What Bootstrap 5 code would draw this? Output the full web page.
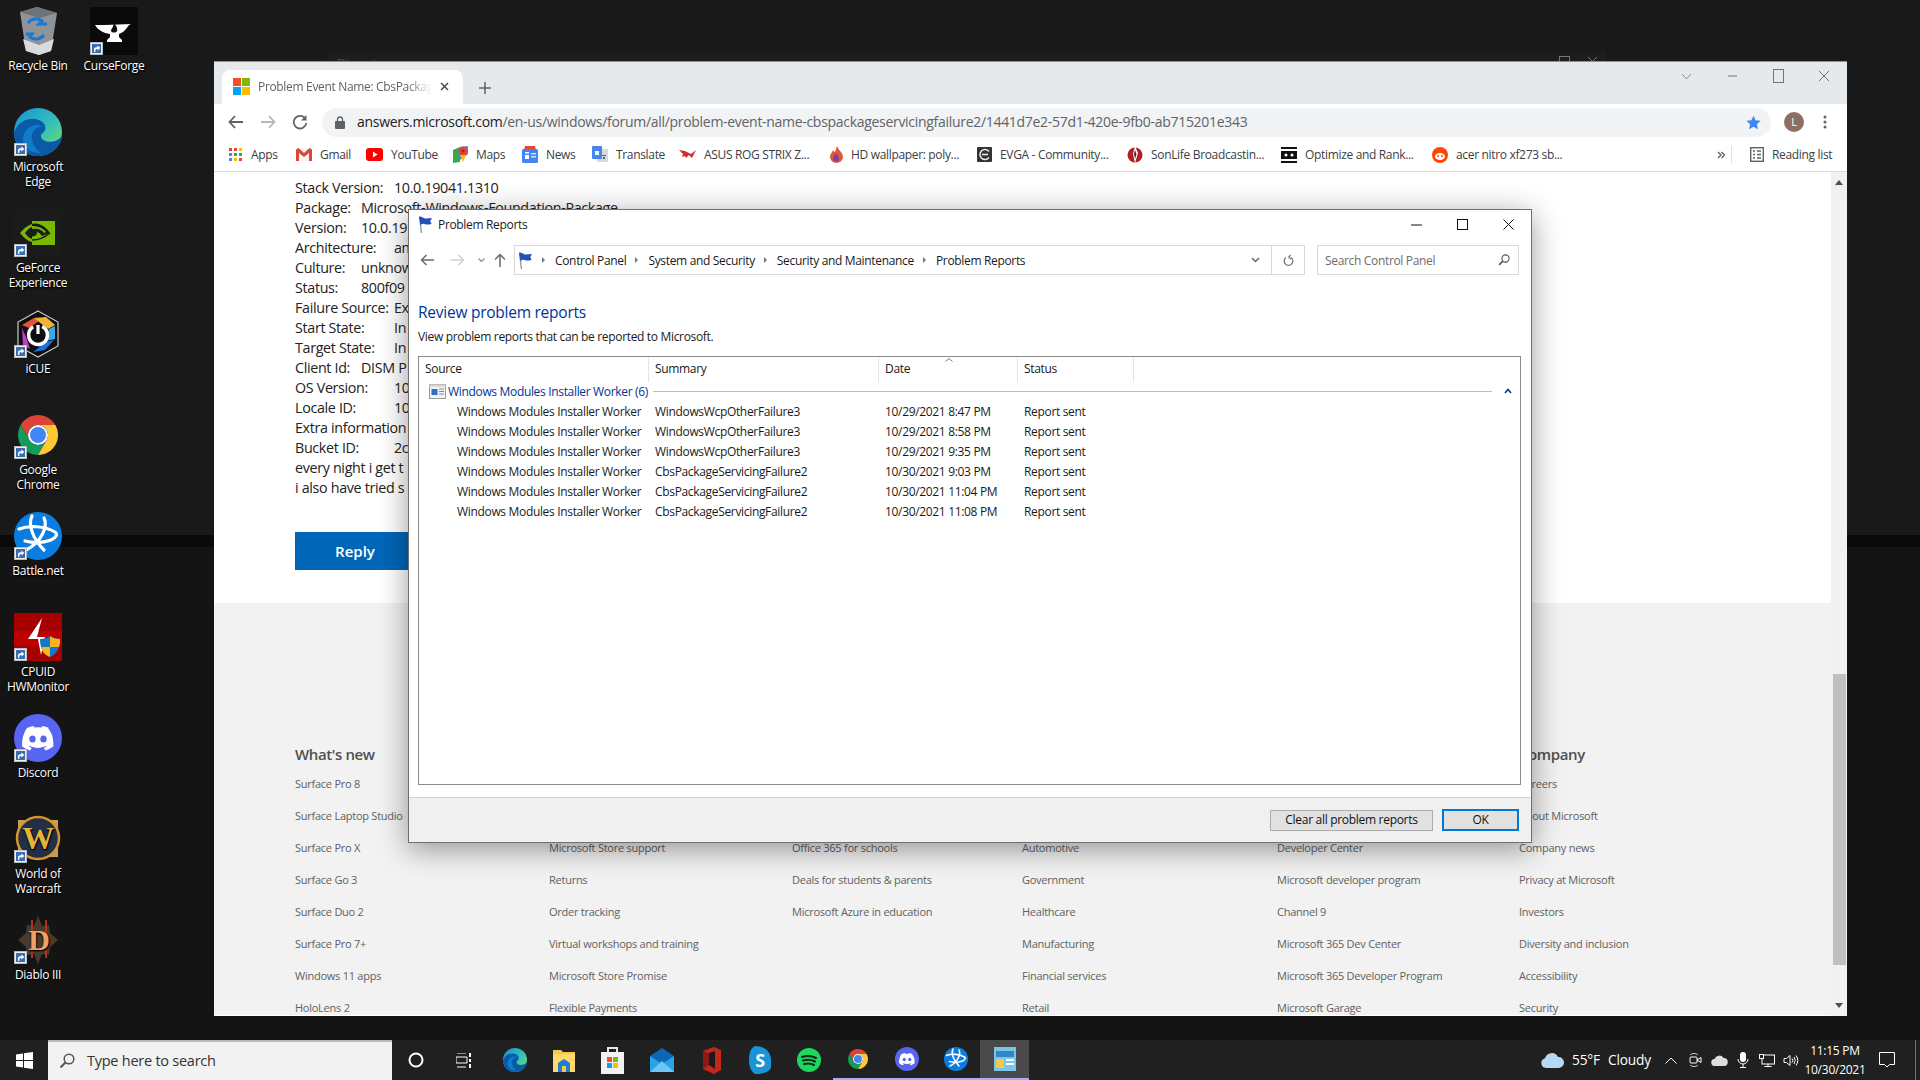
<!DOCTYPE html>
<html lang="en">
<head>
  <meta charset="UTF-8">
  <title>Problem Reports</title>
  <link rel="stylesheet" href="https://cdn.jsdelivr.net/npm/bootstrap@5.3.3/dist/css/bootstrap.min.css">
  <script src="https://cdn.jsdelivr.net/npm/bootstrap@5.3.3/dist/js/bootstrap.bundle.min.js"></script>
  <style>
    html, body { margin: 0; background: #141414; }
    body { font-family: "Open Sans", "Liberation Sans", sans-serif; font-size: 12px; letter-spacing: -.33px; line-height: 1.25; color: #1a1a1a; }
    svg { display: block; flex: none; }
    .screen { width: 1920px; height: 1080px; overflow: hidden; }
    .desk { height: 1040px; background: linear-gradient(to bottom, #191919 0 535px, #0a0a0a 535px 547px, #141414 547px); }

    /* desktop icons */
    .desk-col { width: 76px; }
    .desk-item { height: 101px; padding-top: 7px; color: #fff; text-align: center; line-height: 15px; letter-spacing: -.3px; text-shadow: 0 1px 2px #000, 1px 1px 1px #000; }
    .desk-ico { width: 48px; height: 48px; margin: 0 auto 3px; }
    .lnk { left: 0; bottom: 0; width: 13px; height: 13px; }
    .behind { left: 327px; top: 51px; width: 1279px; height: 14px; background: #1d1d1d; color: #4a4a4a; padding: 5px 0 0 10px; }
    .behind-ctl { gap: 17px; color: #777; }

    /* chrome window */
    .cwin { left: 214px; top: 61px; width: 1633px; height: 955px; background: #fff; border-top: 1px solid #8d9094; }
    .cstrip { height: 42px; background: #e6e9ec; padding-left: 8px; }
    .ctab { width: 241px; height: 34px; margin-top: 8px; padding: 0 0 1px 11px; background: #fff; border-radius: 8px 8px 0 0; color: #5f6368; }
    .ctab-title { width: 174px; margin-left: 8px; white-space: nowrap; overflow: hidden; -webkit-mask-image: linear-gradient(to right, #000 85%, transparent); mask-image: linear-gradient(to right, #000 85%, transparent); }
    .ctab-x { margin: 0 14px 0 auto; }
    .cplus { margin: 20px 0 0 16px; }
    .cctl { margin-left: auto; padding-bottom: 14px; color: #80868b; }
    .cctl > div { width: 46px; }
    .ctool { height: 36px; padding-left: 6px; }
    .ctool-ico { width: 32px; }
    .omni { height: 29px; width: 1449px; margin-left: 6px; padding: 0 10px 0 13px; background: #f1f3f4; border-radius: 15px; font-size: 14px; letter-spacing: -.3px; color: #5f6368; }
    .omni b { font-weight: 400; color: #202124; }
    .cavatar { margin-left: 13px; }
    .cdots { margin-left: 19px; }
    .cbm { height: 32px; padding: 0 0 2px 15px; border-bottom: 1px solid #d8dadd; display: grid; grid-template-columns: 67px 70px 87px 69px 70px 87px 151px 147px 150px 154px 151px 285px 14px 19px auto; align-items: center; color: #3c4043; }
    .cbm span { white-space: nowrap; }
    .cbm > div { gap: 8px; }
    .cbm-rule { height: 18px; }

    /* page */
    .article { height: 431px; padding: 6px 0 0 81px; font-size: 14.3px; line-height: 20px; color: #222; }
    .art-a { display: inline-block; width: 66px; }
    .art-b { display: inline-block; width: 99px; }
    .reply-btn { width: 120px; height: 38px; margin-top: 34px; background: #0067b8; color: #fff; font-size: 15px; font-weight: 600; border-radius: 0; border: 0; letter-spacing: 0; }
    .pfoot { height: 412px; overflow: hidden; background: #f2f2f2; padding: 141px 0 0 81px; color: #616161; font-size: 11px; }
    .pfoot-grid { display: grid; grid-template-columns: 254px 243px 230px 255px 242px 200px; }
    .pfoot-head { height: 24px; font-size: 15px; font-weight: 600; line-height: 20px; letter-spacing: -.4px; color: #505050; }
    .pfoot-link { height: 32px; line-height: 32px; white-space: nowrap; letter-spacing: -.25px; }
    .sbar { width: 16px; background: #f1f1f1; }
    .sbar-thumb { height: 291px; margin: 502px 1px 0 2px; background: #bfbfbf; }

    /* problem reports dialog */
    .dlg { left: 408px; top: 209px; width: 1124px; height: 634px; background: #fff; border: 1px solid #707070; box-shadow: 0 6px 28px rgba(0,0,0,.4); }
    .dlg-title { height: 29px; margin-bottom: 2px; padding-left: 9px; }
    .dlg-title-txt { margin-left: 5px; }
    .dlg-btns > div { width: 46px; height: 29px; }
    .dlg-nav { height: 34px; padding-top: 4px; }
    .dlg-arrows { width: 105px; padding-left: 11px; gap: 9px; }
    .crumb { width: 791px; height: 30px; border: 1px solid #d9d9d9; padding-left: 3px; }
    .crumb span { white-space: nowrap; }
    .crumb-sep { width: 0; height: 0; margin: 0 10px 0 9px; border-left: 3px solid #777; border-top: 3px solid transparent; border-bottom: 3px solid transparent; }
    .crumb-drop { margin: 0 11px 0 auto; }
    .crumb-ref { width: 33px; height: 28px; border-left: 1px solid #d9d9d9; }
    .srch { width: 202px; height: 30px; margin-left: 12px; padding: 0 8px 0 7px; border: 1px solid #d9d9d9; color: #6d6d6d; }
    .dlg-h { height: 22px; margin: 26px 0 0 9px; font-size: 15.5px; line-height: 22px; color: #003399; letter-spacing: -.25px; }
    .dlg-sub { height: 17px; margin: 5px 0 0 9px; line-height: 17px; }
    .plist { height: 430px; margin: 11px 10px 0 9px; border: 1px solid #8c8c8c; }
    .sort-caret { left: 526px; top: 1px; }
    .prow { display: grid; grid-template-columns: 230px 230px 139px 116px; }
    .prow > div { padding-left: 6px; white-space: nowrap; }
    .prow > div:first-child { padding-left: 38px; }
    .phead { height: 25px; line-height: 20px; }
    .phead > div { height: 25px; padding-top: 2px; border-right: 1px solid #e5e5e5; }
    .phead > div:first-child { padding-left: 6px; }
    .pgroup { height: 18px; margin-bottom: 2px; padding-left: 10px; color: #003399; }
    .pgroup-txt { margin-left: 2px; white-space: nowrap; }
    .pgroup-line { height: 1px; background: #a6bfe3; margin: 0 12px 0 5px; }
    .pdata { height: 20px; line-height: 20px; }
    .dfoot { height: 45px; margin-top: 12px; background: #f0f0f0; border-top: 1px solid #d4d4d4; padding-right: 12px; gap: 9px; }
    .dbtn { height: 21px; background: #e1e1e1; border: 1px solid #adadad; border-radius: 0; font-size: 12px; line-height: 1; padding: 0; letter-spacing: -.3px; color: #111; }
    .dbtn-clear { width: 163px; }
    .dbtn-ok { width: 77px; height: 22px; border: 2px solid #0078d7; }

    /* taskbar */
    .tbar { height: 40px; background: #202020; color: #fff; }
    .tb-item { width: 49px; height: 40px; }
    .tb-w48 { width: 48px; }
    .tb-first { margin-left: 1px; }
    .tb-run { border-bottom: 2px solid #acacf0; }
    .tb-now { background: #4a4a4a; }
    .tb-search { width: 344px; height: 40px; background: #f2f2f2; border-top: 2px solid #b9b9b9; padding-left: 11px; gap: 12px; color: #333; font-size: 14.5px; letter-spacing: -.25px; }
    .tray-i { width: 24px; height: 40px; }
    .clock { width: 64px; text-align: center; line-height: 19px; letter-spacing: -.25px; }
    .wtxt { font-size: 13.7px; letter-spacing: -.15px; }
    .notif { width: 40px; }
    .showdesk { width: 5px; height: 40px; margin-left: 8px; }
  </style>
</head>

<body>
  <svg width="0" height="0" class="position-absolute">
    <defs>
      <linearGradient id="edgeG" x1="0" y1="0" x2="1" y2="1"><stop offset="0" stop-color="#1591d8"/><stop offset=".55" stop-color="#35c1b8"/><stop offset="1" stop-color="#7fe35a"/></linearGradient>
      <symbol id="lnkArrow" viewBox="0 0 13 13"><rect width="13" height="13" fill="#f0f0f0"/><rect x=".5" y=".5" width="12" height="12" fill="none" stroke="#bbb"/><rect x="2" y="2" width="9" height="9" fill="#3c6cb0"/><path d="M4 10V7.500C4 6 5 5.200 6.500 5.200H7.400V3.600L10.400 6 7.400 8.400V6.900H6.600C5.600 6.900 5.300 7.600 5.300 10z" fill="#fff"/></symbol>
      <symbol id="icChrome" viewBox="0 0 48 48"><path fill="#db4437" d="M6.680 14A20 20 0 0 1 41.320 14H24A10 10 0 0 0 15.340 29z"/><path fill="#0f9d58" d="M6.680 14L15.340 29A10 10 0 0 0 32.660 29L24 44A20 20 0 0 1 6.680 14z"/><path fill="#fcc934" d="M41.320 14H24A10 10 0 0 1 32.660 29L24 44A20 20 0 0 0 41.320 14z"/><circle cx="24" cy="24" r="10" fill="#fff"/><circle cx="24" cy="24" r="8" fill="#4285f4"/></symbol>
      <symbol id="icEdge" viewBox="0 0 48 48"><circle cx="24" cy="24" r="24" fill="url(#edgeG)"/><path fill="#0b5aa8" d="M0 25C3 15 12 10 21 11c7 1 12 6 10 11-1 3-4 3-4 6 0 5 8 7 14 5 3-1 5-3 7-5-1 11-11 20-24 20C10 48 0 38 0 25z"/><path fill="#0f7cc9" d="M9 30c1-8 7-13 14-13 3 0 5 1 6 2-5-1-10 2-11 8-1 7 3 14 9 18-10 1-19-6-18-15z"/></symbol>
      <symbol id="icDiscord" viewBox="0 0 48 48"><circle cx="24" cy="24" r="24" fill="#5865f2"/><path fill="#fff" d="M35 14c-2.200-1-4.400-1.700-6.600-2.100l-.9 1.700a22 22 0 0 0-7 0l-.9-1.700c-2.200.4-4.400 1.100-6.600 2.100-4.200 6.300-5.300 12.500-4.800 18.600 2.700 2 5.300 3.200 7.800 4l1.700-2.700c-1-.3-1.900-.8-2.800-1.300l.7-.5c5.300 2.400 11.100 2.400 16.300 0l.7.500c-.9.500-1.800 1-2.800 1.300l1.700 2.700c2.500-.8 5.100-2 7.800-4 .6-7.100-1.100-13.300-5.300-18.600z"/><ellipse cx="18.500" cy="25" rx="3.200" ry="3.600" fill="#5865f2"/><ellipse cx="29.500" cy="25" rx="3.200" ry="3.600" fill="#5865f2"/></symbol>
      <symbol id="icBattle" viewBox="0 0 48 48"><circle cx="24" cy="24" r="24" fill="#0b7de0"/><g fill="none" stroke="#fff" stroke-width="3.200" stroke-linecap="round"><path d="M5 17c10-4 26-3 36 3 3 2 1 6-4 8-8 3-18 3-26 1"/><path d="M18 4c-4 8 0 22 12 34"/><path d="M30 6c4 8-2 24-18 32"/></g></symbol>
      <symbol id="icMag" viewBox="0 0 16 16"><circle cx="10" cy="6" r="4.800" fill="none" stroke="#555" stroke-width="1.500"/><path d="M6.400 9.500L1.500 14.500" stroke="#555" stroke-width="2"/></symbol>
      <symbol id="icFlag" viewBox="0 0 15 17"><path d="M1.500 1L3.500 17" stroke="#8a94a6" stroke-width="1.300"/><path d="M1 .5c4 0 4 2 7 2 2 0 4-.5 6-.5-1 1.500-1 2.500-2 3 1 1 1 1.500 1.500 3-3 .5-5 1-7 0-1-.5-2.500 0-4 1z" fill="#2250b8"/></symbol>
    </defs>
  </svg>

  <div class="screen d-flex flex-column">
    <div class="desk position-relative d-flex">

      <div class="desk-col">
        <div class="desk-item"><div class="desk-ico position-relative">
          <svg width="48" height="48" viewBox="0 0 48 48"><path d="M6 5L23 0 43 6 37 44 25 48 12 44z" fill="#8f9498"/><path d="M6 5L23 0 43 6 25 11z" fill="#6e7377"/><path d="M9 32l16 6 15-6-3 12-12 4-13-4z" fill="#d8dade"/><path d="M14 16a10 10 0 0 1 14-2l-3 3h8" fill="none" stroke="#1b79d0" stroke-width="3"/><path d="M30 28a10 10 0 0 1-14 2l2-3h-6" fill="none" stroke="#1b79d0" stroke-width="3"/></svg>
        </div>Recycle Bin</div>
        <div class="desk-item"><div class="desk-ico position-relative"><svg width="48" height="48"><use href="#icEdge"/></svg><svg class="lnk position-absolute"><use href="#lnkArrow"/></svg></div>Microsoft<br>Edge</div>
        <div class="desk-item"><div class="desk-ico position-relative">
          <svg width="48" height="48" viewBox="0 0 48 48"><rect width="48" height="48" fill="#1b1b1b"/><rect x="18" y="12" width="23" height="24" fill="#76b900"/><path d="M6 24c5-6 9-8 12-9v3c-3 1-5 3-7 6 2 3 4 5 7 6v3c-4-1-8-4-12-9z" fill="#76b900"/><ellipse cx="18" cy="24" rx="5" ry="3.500" fill="#1b1b1b"/><path d="M18 15c7-2 14 3 18 9l-8 3c-2-3-5-5-10-5v-2c6-1 10 1 12 4l2-1c-3-4-8-6-14-6z" fill="#1b1b1b"/><path d="M18 31c5 0 12-2 18-7" fill="none" stroke="#1b1b1b" stroke-width="1.500"/></svg>
          <svg class="lnk position-absolute"><use href="#lnkArrow"/></svg></div>GeForce<br>Experience</div>
        <div class="desk-item"><div class="desk-ico position-relative">
          <svg width="48" height="48" viewBox="0 0 48 48"><path d="M24 1L44 12V36L24 47 4 36V12z" fill="#0e0e0e" stroke="#c9c9c9" stroke-width="1.200"/><path d="M8 15L20 8l8 1-13 9z" fill="#e5533d"/><path d="M20 8l12-1 9 8-7 4z" fill="#f2b431"/><path d="M41 16v13l-9 2 3-12z" fill="#38a7e8"/><path d="M32 32l8-2-9 10-12 2z" fill="#1a73e0"/><path d="M8 18l4 9 4 12-7-4z" fill="#c03cd2"/><circle cx="24" cy="25" r="9.500" fill="none" stroke="#fff" stroke-width="3.500" stroke-dasharray="50 10" transform="rotate(-64 24 25)"/><rect x="22.400" y="15" width="3.200" height="9" fill="#fff"/></svg>
          <svg class="lnk position-absolute"><use href="#lnkArrow"/></svg></div>iCUE</div>
        <div class="desk-item"><div class="desk-ico position-relative"><svg width="48" height="48"><use href="#icChrome"/></svg><svg class="lnk position-absolute"><use href="#lnkArrow"/></svg></div>Google<br>Chrome</div>
        <div class="desk-item"><div class="desk-ico position-relative"><svg width="48" height="48"><use href="#icBattle"/></svg><svg class="lnk position-absolute"><use href="#lnkArrow"/></svg></div>Battle.net</div>
        <div class="desk-item"><div class="desk-ico position-relative">
          <svg width="48" height="48" viewBox="0 0 48 48"><rect width="48" height="48" fill="#a80000"/><rect y="18" width="48" height="14" fill="#bd0000"/><path d="M28 5L14 26H24L27 42 31 24H23z" fill="#fff"/><path d="M26 26c4 0 8-1 10-3 2 2 6 3 10 3 0 9-3 15-10 18-7-3-10-9-10-18z" fill="#1476c8"/><path d="M36 23c2 2 6 3 10 3 0 3 0 5-1 8H36z" fill="#f4b51e"/><path d="M27 34H36V44C31 42 28 39 27 34z" fill="#f4b51e"/></svg>
          <svg class="lnk position-absolute"><use href="#lnkArrow"/></svg></div>CPUID<br>HWMonitor</div>
        <div class="desk-item"><div class="desk-ico position-relative"><svg width="48" height="48"><use href="#icDiscord"/></svg><svg class="lnk position-absolute"><use href="#lnkArrow"/></svg></div>Discord</div>
        <div class="desk-item"><div class="desk-ico position-relative">
          <svg width="48" height="48" viewBox="0 0 48 48"><rect x="4" y="5" width="40" height="37" fill="#c7a056"/><circle cx="24" cy="23" r="21" fill="#223047" stroke="#d9942b" stroke-width="2.500"/><text x="24" y="34" text-anchor="middle" font-family="Liberation Serif" font-weight="700" font-size="32" fill="#e5b23c">W</text></svg>
          <svg class="lnk position-absolute"><use href="#lnkArrow"/></svg></div>World of<br>Warcraft</div>
        <div class="desk-item"><div class="desk-ico position-relative">
          <svg width="48" height="48" viewBox="0 0 48 48"><path d="M24 0l4 10 7-1 1 8 8 7-8 7-1 8-7-1-4 10-4-10-7 1-1-8-8-7 8-7 1-8 7 1z" fill="#4a3a2c"/><path d="M18 4v38M32 4v38" stroke="#b3301a" stroke-width="2"/><text x="25" y="34" text-anchor="middle" font-family="Liberation Serif" font-weight="700" font-size="30" fill="#e9a46a">D</text></svg>
          <svg class="lnk position-absolute"><use href="#lnkArrow"/></svg></div>Diablo III</div>
      </div>
      <div class="desk-col">
        <div class="desk-item"><div class="desk-ico position-relative">
          <svg width="48" height="48" viewBox="0 0 48 48"><rect width="48" height="48" fill="#0a0a0a"/><path d="M5 18h10l26-1-2 1c-4 6-7 8-10 9v3l3 3v2H17v-2l3-3v-3c-7-1-12-4-15-9z" fill="#fff"/><path d="M24 16c2 3 4 5 3 8-1 2-5 2-6 0 0-2 2-3 3-8z" fill="#111"/></svg>
          <svg class="lnk position-absolute"><use href="#lnkArrow"/></svg></div>CurseForge</div>
      </div>

      <div class="behind position-absolute d-flex align-items-start justify-content-between">
        <span>Dispost</span>
        <div class="behind-ctl d-flex pe-2">
          <svg width="11" height="11"><rect x=".5" y=".5" width="10" height="10" fill="none" stroke="#777"/></svg>
          <svg width="11" height="11"><path d="M1 1L10 10M10 1L1 10" stroke="#777"/></svg>
        </div>
      </div>

      <div class="cwin position-absolute d-flex flex-column">
        <div class="cstrip d-flex">
          <div class="ctab d-flex align-items-center">
            <svg width="17" height="17" viewBox="0 0 17 17"><rect width="8" height="8" fill="#f25022"/><rect x="9" width="8" height="8" fill="#7fba00"/><rect y="9" width="8" height="8" fill="#00a4ef"/><rect x="9" y="9" width="8" height="8" fill="#ffb900"/></svg>
            <span class="ctab-title">Problem Event Name: CbsPackag</span>
            <svg class="ctab-x" width="9" height="9"><path d="M1 1L8 8M8 1L1 8" stroke="#444" stroke-width="1.400"/></svg>
          </div>
          <svg class="cplus" width="12" height="12"><path d="M6 0V12M0 6H12" stroke="#5f6368" stroke-width="1.500"/></svg>
          <div class="cctl d-flex align-items-center text-center">
            <div><svg class="mx-auto" width="11" height="7"><path d="M1 1L5.500 6 10 1" fill="none" stroke="#8a8e92"/></svg></div>
            <div><svg class="mx-auto" width="11" height="2"><path d="M1 1H10" stroke="#70757a"/></svg></div>
            <div><svg class="mx-auto" width="11" height="14"><rect x=".5" y=".5" width="10" height="13" fill="none" stroke="#70757a"/></svg></div>
            <div><svg class="mx-auto" width="12" height="12"><path d="M1 1L11 11M11 1L1 11" stroke="#70757a"/></svg></div>
          </div>
        </div>

        <div class="ctool d-flex align-items-center">
          <div class="ctool-ico"><svg class="mx-auto" width="16" height="14" viewBox="0 0 16 14"><path d="M15 7H2M7 1L1.500 7 7 13" fill="none" stroke="#5f6368" stroke-width="1.800"/></svg></div>
          <div class="ctool-ico"><svg class="mx-auto" width="16" height="14" viewBox="0 0 16 14"><path d="M1 7H14M9 1L14.500 7 9 13" fill="none" stroke="#b4b7ba" stroke-width="1.800"/></svg></div>
          <div class="ctool-ico"><svg class="mx-auto" width="16" height="16" viewBox="0 0 16 16"><path d="M13.500 5A6.300 6.300 0 1 0 14.300 9" fill="none" stroke="#5f6368" stroke-width="1.800"/><path d="M14.500 1V6.500H9z" fill="#5f6368"/></svg></div>
          <div class="omni d-flex align-items-center">
            <svg class="me-2" width="10" height="13" viewBox="0 0 10 13"><path d="M2.500 5V3.500a2.500 2.500 0 0 1 5 0V5" fill="none" stroke="#5f6368" stroke-width="1.300"/><rect y="5" width="10" height="8" rx="1" fill="#5f6368"/></svg>
            <span class="ms-1 text-nowrap"><b>answers.microsoft.com</b>/en-us/windows/forum/all/problem-event-name-cbspackageservicingfailure2/1441d7e2-57d1-420e-9fb0-ab715201e343</span>
            <svg class="ms-auto" width="15" height="15" viewBox="0 0 24 24"><path d="M12 1l3.400 7.400 8 .9-6 5.400 1.700 8L12 18.600 4.900 22.700l1.700-8-6-5.400 8-.9z" fill="#4285f4"/></svg>
          </div>
          <svg class="cavatar" width="20" height="20" viewBox="0 0 20 20"><circle cx="10" cy="10" r="10" fill="#8d6e63"/><text x="10" y="14" text-anchor="middle" font-size="11" fill="#fff" font-family="Open Sans">L</text></svg>
          <svg class="cdots" width="4" height="14"><circle cx="2" cy="2" r="1.500" fill="#5f6368"/><circle cx="2" cy="7" r="1.500" fill="#5f6368"/><circle cx="2" cy="12" r="1.500" fill="#5f6368"/></svg>
        </div>

        <div class="cbm">
          <div class="d-flex align-items-center">
            <svg width="14" height="14"><rect width="3" height="3" fill="#ea4335"/><rect x="5" width="3" height="3" fill="#ea4335"/><rect x="10" width="3" height="3" fill="#fbbc04"/><rect y="5" width="3" height="3" fill="#4285f4"/><rect x="5" y="5" width="3" height="3" fill="#34a853"/><rect x="10" y="5" width="3" height="3" fill="#34a853"/><rect y="10" width="3" height="3" fill="#4285f4"/><rect x="5" y="10" width="3" height="3" fill="#fbbc04"/><rect x="10" y="10" width="3" height="3" fill="#ea4335"/></svg><span>Apps</span>
          </div>
          <div class="d-flex align-items-center">
            <svg width="16" height="13" viewBox="0 0 16 13"><rect y="1" width="16" height="12" fill="#f4f4f4"/><path d="M0 1.500V13H3V5L8 9 13 5V13H16V1.500L13.500 0 8 5 2.500 0z" fill="#d9483b"/></svg><span>Gmail</span>
          </div>
          <div class="d-flex align-items-center">
            <svg width="17" height="13" viewBox="0 0 17 13"><rect width="17" height="13" rx="3" fill="#f00"/><path d="M7 3.500V9.500L11.500 6.500z" fill="#fff"/></svg><span>YouTube</span>
          </div>
          <div class="d-flex align-items-center">
            <svg width="15" height="17" viewBox="0 0 15 17"><path d="M0 4L7 1V16L0 17z" fill="#34a853"/><path d="M7 1L15 0V8L7 14z" fill="#4285f4"/><circle cx="10" cy="5" r="4.500" fill="#ea4335"/><path d="M7 9L10 16l3-7z" fill="#fbbc04"/><circle cx="10" cy="5" r="1.600" fill="#a52714"/></svg><span>Maps</span>
          </div>
          <div class="d-flex align-items-center">
            <svg width="16" height="17" viewBox="0 0 16 17"><path d="M3 0H13L14 4H2z" fill="#e8453c"/><rect y="3" width="16" height="14" rx="1.500" fill="#4285f4"/><rect x="3" y="6" width="4" height="1.500" fill="#fff"/><rect x="3" y="9" width="4" height="4" fill="#fff"/><rect x="9" y="7" width="5" height="1.500" fill="#cfe0fb"/><rect x="9" y="10" width="5" height="1.500" fill="#cfe0fb"/></svg><span>News</span>
          </div>
          <div class="d-flex align-items-center">
            <svg width="16" height="17" viewBox="0 0 16 17"><rect x="5" y="3" width="11" height="13" rx="1" fill="#d7d9dc"/><rect width="10" height="13" rx="1" fill="#4285f4"/><rect x="3" y="5" width="4" height="4" fill="#fff"/><rect x="10" y="9" width="4" height="1" fill="#5f6368"/><rect x="11" y="11" width="2" height="2" fill="#5f6368"/></svg><span>Translate</span>
          </div>
          <div class="d-flex align-items-center">
            <svg width="17" height="11" viewBox="0 0 17 11"><path d="M0 1l6 1 6 3 5-4-4 8-3-3-3 3-1-2-3 1 1-3z" fill="#d42a31"/></svg><span>ASUS ROG STRIX Z...</span>
          </div>
          <div class="d-flex align-items-center">
            <svg width="13" height="17" viewBox="0 0 13 17"><path d="M7 0c1 4 6 6 6 11a6.500 6 0 0 1-13 0c0-3 2-4 3-7 1 1 1 2 2 2 1-2 1-4 2-6z" fill="#e0573a"/><path d="M6 7c1 2 3 3 3 5.500a3 3 0 0 1-6 0C3 11 5 9 6 7z" fill="#7d3fa0"/></svg><span>HD wallpaper: poly...</span>
          </div>
          <div class="d-flex align-items-center">
            <svg width="15" height="15" viewBox="0 0 15 15"><rect width="15" height="15" rx="1" fill="#333"/><path d="M12 4.500A5 5 0 1 0 12 10.500M5 7.500H11" fill="none" stroke="#eee" stroke-width="1.500"/></svg><span>EVGA - Community...</span>
          </div>
          <div class="d-flex align-items-center">
            <svg width="16" height="17" viewBox="0 0 16 17"><circle cx="8" cy="9" r="7.500" fill="#b81c22"/><path d="M8 0L11 7 8 17 6 8z" fill="#fff"/><path d="M8 4L9.500 8 8 13 7 8z" fill="#333"/></svg><span>SonLife Broadcastin...</span>
          </div>
          <div class="d-flex align-items-center">
            <svg width="16" height="16" viewBox="0 0 16 16"><rect width="16" height="16" fill="#111"/><rect y="2" width="16" height="2" fill="#fff"/><rect x="1" y="5" width="14" height="6" fill="#111"/><circle cx="5" cy="8" r="1.500" fill="#fff"/><circle cx="11" cy="8" r="1.500" fill="#fff"/><rect y="12" width="16" height="2" fill="#fff"/></svg><span>Optimize and Rank...</span>
          </div>
          <div class="d-flex align-items-center">
            <svg width="16" height="16" viewBox="0 0 16 16"><circle cx="8" cy="8" r="8" fill="#ff4500"/><ellipse cx="8" cy="9.500" rx="5" ry="3.500" fill="#fff"/><circle cx="6" cy="9" r="1" fill="#ff4500"/><circle cx="10" cy="9" r="1" fill="#ff4500"/></svg><span>acer nitro xf273 sb...</span>
          </div>
          <svg width="8" height="8" viewBox="0 0 8 8"><path d="M1 1L4 4 1 7M4.500 1L7.500 4 4.500 7" fill="none" stroke="#5f6368" stroke-width="1.400"/></svg>
          <div class="cbm-rule border-start"></div>
          <div class="d-flex align-items-center">
            <svg width="14" height="15" viewBox="0 0 14 15"><rect x=".7" y=".7" width="12.600" height="13.600" fill="none" stroke="#5f6368" stroke-width="1.400"/><path d="M3 4H5M3 7.500H5M3 11H5M7 4H11M7 7.500H11M7 11H11" stroke="#5f6368" stroke-width="1.300"/></svg><span>Reading list</span>
          </div>
        </div>

        <div class="d-flex flex-grow-1 overflow-hidden">
          <div class="flex-grow-1 overflow-hidden">
            <div class="article">
              <div><span class="art-b">Stack Version:</span>10.0.19041.1310</div>
              <div><span class="art-a">Package:</span>Microsoft-Windows-Foundation-Package</div>
              <div><span class="art-a">Version:</span>10.0.19</div>
              <div><span class="art-b">Architecture:</span>am</div>
              <div><span class="art-a">Culture:</span>unknow</div>
              <div><span class="art-a">Status:</span>800f09</div>
              <div><span class="art-b">Failure Source:</span>Ex</div>
              <div><span class="art-b">Start State:</span>In</div>
              <div><span class="art-b">Target State:</span>In</div>
              <div><span class="art-a">Client Id:</span>DISM P</div>
              <div><span class="art-b">OS Version:</span>10</div>
              <div><span class="art-b">Locale ID:</span>10</div>
              <div>Extra information</div>
              <div><span class="art-b">Bucket ID:</span>2c</div>
              <div>every night i get t</div>
              <div>i also have tried s</div>
              <button class="btn reply-btn">Reply</button>
            </div>
            <div class="pfoot">
              <div class="pfoot-grid">
                <div><div class="pfoot-head">What's new</div><div class="pfoot-link">Surface Pro 8</div><div class="pfoot-link">Surface Laptop Studio</div><div class="pfoot-link">Surface Pro X</div><div class="pfoot-link">Surface Go 3</div><div class="pfoot-link">Surface Duo 2</div><div class="pfoot-link">Surface Pro 7+</div><div class="pfoot-link">Windows 11 apps</div><div class="pfoot-link">HoloLens 2</div></div>
                <div><div class="pfoot-head">&nbsp;</div><div class="pfoot-link">&nbsp;</div><div class="pfoot-link">&nbsp;</div><div class="pfoot-link">Microsoft Store support</div><div class="pfoot-link">Returns</div><div class="pfoot-link">Order tracking</div><div class="pfoot-link">Virtual workshops and training</div><div class="pfoot-link">Microsoft Store Promise</div><div class="pfoot-link">Flexible Payments</div></div>
                <div><div class="pfoot-head">&nbsp;</div><div class="pfoot-link">&nbsp;</div><div class="pfoot-link">&nbsp;</div><div class="pfoot-link">Office 365 for schools</div><div class="pfoot-link">Deals for students &amp; parents</div><div class="pfoot-link">Microsoft Azure in education</div></div>
                <div><div class="pfoot-head">&nbsp;</div><div class="pfoot-link">&nbsp;</div><div class="pfoot-link">&nbsp;</div><div class="pfoot-link">Automotive</div><div class="pfoot-link">Government</div><div class="pfoot-link">Healthcare</div><div class="pfoot-link">Manufacturing</div><div class="pfoot-link">Financial services</div><div class="pfoot-link">Retail</div></div>
                <div><div class="pfoot-head">&nbsp;</div><div class="pfoot-link">&nbsp;</div><div class="pfoot-link">&nbsp;</div><div class="pfoot-link">Developer Center</div><div class="pfoot-link">Microsoft developer program</div><div class="pfoot-link">Channel 9</div><div class="pfoot-link">Microsoft 365 Dev Center</div><div class="pfoot-link">Microsoft 365 Developer Program</div><div class="pfoot-link">Microsoft Garage</div></div>
                <div><div class="pfoot-head">Company</div><div class="pfoot-link">Careers</div><div class="pfoot-link">About Microsoft</div><div class="pfoot-link">Company news</div><div class="pfoot-link">Privacy at Microsoft</div><div class="pfoot-link">Investors</div><div class="pfoot-link">Diversity and inclusion</div><div class="pfoot-link">Accessibility</div><div class="pfoot-link">Security</div></div>
              </div>
            </div>
          </div>
          <div class="sbar position-relative">
            <svg class="position-absolute top-0 start-0 mt-2 ms-1" width="8" height="5"><path d="M4 0L8 5H0z" fill="#505050"/></svg>
            <div class="sbar-thumb"></div>
            <svg class="position-absolute bottom-0 start-0 mb-2 ms-1" width="8" height="5"><path d="M0 0H8L4 5z" fill="#505050"/></svg>
          </div>
        </div>
      </div>

      <div class="dlg position-absolute d-flex flex-column">
        <div class="dlg-title d-flex align-items-center">
          <svg width="15" height="17"><use href="#icFlag"/></svg>
          <span class="dlg-title-txt">Problem Reports</span>
          <div class="dlg-btns d-flex ms-auto">
            <div class="d-flex align-items-center justify-content-center"><svg width="11" height="2"><path d="M0 1H11" stroke="#111"/></svg></div>
            <div class="d-flex align-items-center justify-content-center"><svg width="11" height="11"><rect x=".5" y=".5" width="10" height="10" fill="none" stroke="#111"/></svg></div>
            <div class="d-flex align-items-center justify-content-center"><svg width="11" height="11"><path d="M.5 .5L10.500 10.500M10.500 .5L.5 10.500" stroke="#111"/></svg></div>
          </div>
        </div>
        <div class="dlg-nav d-flex">
          <div class="dlg-arrows d-flex align-items-center">
            <svg width="14" height="12" viewBox="0 0 14 12"><path d="M14 6H2M6.500 1L1.500 6 6.500 11" fill="none" stroke="#6b6b6b" stroke-width="1.500"/></svg>
            <svg class="ms-2" width="14" height="12" viewBox="0 0 14 12"><path d="M0 6H12M7.500 1L12.500 6 7.500 11" fill="none" stroke="#cfcfcf" stroke-width="1.500"/></svg>
            <svg class="ms-1" width="7" height="5"><path d="M.5 .5L3.500 3.500 6.500 .5" fill="none" stroke="#8a8a8a" stroke-width="1.200"/></svg>
            <svg width="12" height="14" viewBox="0 0 12 14"><path d="M6 14V2M1 6.500L6 1.500 11 6.500" fill="none" stroke="#6b6b6b" stroke-width="1.500"/></svg>
          </div>
          <div class="crumb d-flex align-items-center">
            <svg width="15" height="17"><use href="#icFlag"/></svg>
            <div class="crumb-sep"></div><span>Control Panel</span>
            <div class="crumb-sep"></div><span>System and Security</span>
            <div class="crumb-sep"></div><span>Security and Maintenance</span>
            <div class="crumb-sep"></div><span>Problem Reports</span>
            <svg class="crumb-drop" width="9" height="6"><path d="M1 1L4.500 4.500 8 1" fill="none" stroke="#666" stroke-width="1.500"/></svg>
            <div class="crumb-ref d-flex align-items-center justify-content-center"><svg width="11" height="12" viewBox="0 0 11 12"><path d="M3 3.500A4.300 4.300 0 1 0 8 3.500M5.500 3.500L7.500 1M5.500 3.500L8 5" fill="none" stroke="#777" stroke-width="1.300"/></svg></div>
          </div>
          <div class="srch d-flex align-items-center">
            <span>Search Control Panel</span>
            <svg class="ms-auto" width="12" height="12"><use href="#icMag"/></svg>
          </div>
        </div>
        <div class="dlg-h">Review problem reports</div>
        <div class="dlg-sub">View problem reports that can be reported to Microsoft.</div>
        <div class="plist position-relative">
          <div class="prow phead">
            <div>Source</div><div>Summary</div><div>Date</div><div>Status</div>
          </div>
          <svg class="sort-caret position-absolute" width="8" height="4"><path d="M.5 3.500L4 .5 7.500 3.500" fill="none" stroke="#777"/></svg>
          <div class="pgroup d-flex align-items-center">
            <svg width="17" height="15" viewBox="0 0 17 15"><rect x=".5" y=".5" width="16" height="14" fill="#f4f4f4" stroke="#9a9a9a"/><rect x=".5" y=".5" width="16" height="2.500" fill="#d8d8d8"/><rect x="2.500" y="5" width="6" height="6" fill="#2f6fc4"/><path d="M10 5H15M10 7.500H15M10 10H15" stroke="#7a8aa0"/></svg>
            <span class="pgroup-txt">Windows Modules Installer Worker (6)</span>
            <div class="pgroup-line flex-grow-1"></div>
            <svg class="me-2" width="8" height="6"><path d="M1 5L4 1.500 7 5" fill="none" stroke="#003399" stroke-width="1.600"/></svg>
          </div>
          <div class="prow pdata"><div>Windows Modules Installer Worker</div><div>WindowsWcpOtherFailure3</div><div>10/29/2021 8:47 PM</div><div>Report sent</div></div>
          <div class="prow pdata"><div>Windows Modules Installer Worker</div><div>WindowsWcpOtherFailure3</div><div>10/29/2021 8:58 PM</div><div>Report sent</div></div>
          <div class="prow pdata"><div>Windows Modules Installer Worker</div><div>WindowsWcpOtherFailure3</div><div>10/29/2021 9:35 PM</div><div>Report sent</div></div>
          <div class="prow pdata"><div>Windows Modules Installer Worker</div><div>CbsPackageServicingFailure2</div><div>10/30/2021 9:03 PM</div><div>Report sent</div></div>
          <div class="prow pdata"><div>Windows Modules Installer Worker</div><div>CbsPackageServicingFailure2</div><div>10/30/2021 11:04 PM</div><div>Report sent</div></div>
          <div class="prow pdata"><div>Windows Modules Installer Worker</div><div>CbsPackageServicingFailure2</div><div>10/30/2021 11:08 PM</div><div>Report sent</div></div>
        </div>
        <div class="dfoot d-flex align-items-center justify-content-end">
          <button class="btn dbtn dbtn-clear">Clear all problem reports</button>
          <button class="btn dbtn dbtn-ok">OK</button>
        </div>
      </div>
    </div>

    <div class="tbar d-flex align-items-center">
      <div class="tb-item tb-w48 d-flex align-items-center justify-content-center"><svg width="17" height="17" viewBox="0 0 17 17"><path d="M0 2.500L7 1.500V8H0zM8 1.300L17 0V8H8zM0 9H7V15.500L0 14.500zM8 9H17V17L8 15.700z" fill="#fff"/></svg></div>
      <div class="tb-search d-flex align-items-center">
        <svg width="16" height="16"><use href="#icMag"/></svg><span>Type here to search</span>
      </div>
      <div class="tb-item tb-w48 d-flex align-items-center justify-content-center"><svg width="16" height="16"><circle cx="8" cy="8" r="6.500" fill="none" stroke="#fff" stroke-width="2"/></svg></div>
      <div class="tb-item d-flex align-items-center justify-content-center"><svg width="17" height="15" viewBox="0 0 17 15"><path d="M1 0H10M1 14H10M0 4H11V10H0z" fill="none" stroke="#fff"/><path d="M14 0V4M14 6V9M14 11V15" stroke="#fff" stroke-width="2"/></svg></div>
      <div class="tb-item tb-first d-flex align-items-center justify-content-center"><svg width="24" height="24"><use href="#icEdge"/></svg></div>
      <div class="tb-item d-flex align-items-center justify-content-center"><svg width="22" height="24" viewBox="0 0 22 24"><path d="M0 2H8L10 4H22V24H0z" fill="#f6c84c"/><rect y="6" width="22" height="18" fill="#ffd96b"/><path d="M5 24V15L11 11 17 15V24z" fill="#1f7ed0"/><rect x="9" y="18" width="4" height="6" fill="#f6c84c"/></svg></div>
      <div class="tb-item d-flex align-items-center justify-content-center"><svg width="23" height="28" viewBox="0 0 23 28"><path d="M7 6V2H16V6" fill="none" stroke="#e5e5e5" stroke-width="2"/><rect y="6" width="23" height="22" fill="#f2f2f2"/><rect x="6" y="11" width="5" height="5" fill="#f25022"/><rect x="12" y="11" width="5" height="5" fill="#7fba00"/><rect x="6" y="17" width="5" height="5" fill="#00a4ef"/><rect x="12" y="17" width="5" height="5" fill="#ffb900"/></svg></div>
      <div class="tb-item d-flex align-items-center justify-content-center"><svg width="24" height="24" viewBox="0 0 24 24"><rect y="8" width="24" height="16" fill="#27a3e8"/><path d="M0 8L12 0 24 8 12 16z" fill="#0c68b5"/><path d="M0 24L12 13 24 24z" fill="#6cc7f3"/></svg></div>
      <div class="tb-item d-flex align-items-center justify-content-center"><svg width="21" height="28" viewBox="0 0 21 28"><path d="M3 5L14 1 21 4V24L14 28 3 23V5z" fill="#c4281b"/><path d="M3 5V23L9 19V7z" fill="#8c1a12"/><path d="M9 7L15 5V23L9 19z" fill="#1b1b1b"/></svg></div>
      <div class="tb-item d-flex align-items-center justify-content-center"><svg width="22" height="28" viewBox="0 0 22 28"><path d="M6 0C16 0 22 6 22 14V22C18 28 10 28 6 28 2 26 0 20 0 14 0 6 2 2 6 0z" fill="#1795d6"/><text x="11" y="21" text-anchor="middle" font-size="18" font-weight="700" fill="#fff" font-family="Open Sans">S</text></svg></div>
      <div class="tb-item d-flex align-items-center justify-content-center"><svg width="24" height="24" viewBox="0 0 24 24"><circle cx="12" cy="12" r="12" fill="#1ed760"/><path d="M5 9c5-1.500 10-1 14 1M6 12.500c4-1 9-.6 12 1M7 16c3.500-.8 7-.5 10 1" fill="none" stroke="#0d2a17" stroke-width="2" stroke-linecap="round"/></svg></div>
      <div class="tb-item tb-run d-flex align-items-center justify-content-center"><svg width="24" height="24"><use href="#icChrome"/></svg></div>
      <div class="tb-item tb-run d-flex align-items-center justify-content-center"><svg width="24" height="24"><use href="#icDiscord"/></svg></div>
      <div class="tb-item tb-run d-flex align-items-center justify-content-center"><svg width="24" height="24"><use href="#icBattle"/></svg></div>
      <div class="tb-item tb-run tb-now d-flex align-items-center justify-content-center"><svg width="22" height="24" viewBox="0 0 22 24"><rect width="22" height="24" fill="#7ac4e8"/><rect x="2" y="4" width="18" height="6" fill="#2f86c9"/><rect x="2" y="12" width="8" height="9" fill="#f2c94c"/><rect x="12" y="12" width="8" height="2" fill="#fff"/><rect x="12" y="16" width="8" height="2" fill="#fff"/></svg></div>

      <div class="d-flex align-items-center ms-auto">
        <svg class="me-2" width="23" height="16" viewBox="0 0 23 16"><path d="M5 16a5 5 0 0 1-1-9.800A7 7 0 0 1 17 5a5.500 5.500 0 0 1 1 11z" fill="#b5d9f5"/></svg>
        <span class="wtxt">55°F</span>
        <span class="wtxt ms-2">Cloudy</span>
        <div class="tray-i ms-2 d-flex align-items-center justify-content-center"><svg width="12" height="7"><path d="M.5 6.500L6 1 11.500 6.500" fill="none" stroke="#fff"/></svg></div>
        <div class="tray-i d-flex align-items-center justify-content-center"><svg width="13" height="16" viewBox="0 0 13 16"><path d="M1 3C3 1 7 1 9 3M1 13C3 15 7 15 9 13" fill="none" stroke="#ccc"/><rect x="1" y="5" width="7" height="6" rx="1" fill="none" stroke="#fff"/><path d="M8 8L12 5.500V10.500z" fill="none" stroke="#fff"/></svg></div>
        <div class="tray-i d-flex align-items-center justify-content-center"><svg width="17" height="11" viewBox="0 0 17 11"><path d="M4 11a3.500 3.500 0 0 1-.5-7A5 5 0 0 1 12.500 3 4 4 0 0 1 13 11z" fill="#ddd"/></svg></div>
        <div class="tray-i d-flex align-items-center justify-content-center"><svg width="12" height="16" viewBox="0 0 12 16"><rect x="3" y="0" width="6" height="10" rx="3" fill="#fff"/><path d="M1 7A5 5 0 0 0 11 7M6 12V15M3 15.500H9" fill="none" stroke="#fff"/></svg></div>
        <div class="tray-i d-flex align-items-center justify-content-center"><svg width="16" height="13" viewBox="0 0 16 13"><rect x="3" y="1" width="12.500" height="9" fill="none" stroke="#fff"/><rect x=".5" y=".5" width="4" height="4" fill="#202020" stroke="#fff"/><path d="M9 10V12.500M5.500 12.500H12.500" stroke="#fff"/></svg></div>
        <div class="tray-i d-flex align-items-center justify-content-center"><svg width="16" height="13" viewBox="0 0 16 13"><path d="M1 4.500H3.500L7 1.500V11.500L3.500 8.500H1z" fill="none" stroke="#fff"/><path d="M9 4.500a3 3 0 0 1 0 4M11 3a6 6 0 0 1 0 7M13 1.500a8.500 8.500 0 0 1 0 10" fill="none" stroke="#fff"/></svg></div>
        <div class="clock"><div>11:15 PM</div><div>10/30/2021</div></div>
        <div class="notif d-flex align-items-center justify-content-center"><svg width="16" height="16" viewBox="0 0 16 16"><path d="M.5 .5H15.500V12.500H10.500L8 15 5.500 12.500H.5z" fill="none" stroke="#fff"/></svg></div>
        <div class="showdesk border-start border-secondary"></div>
      </div>
    </div>
  </div>
</body>
</html>
